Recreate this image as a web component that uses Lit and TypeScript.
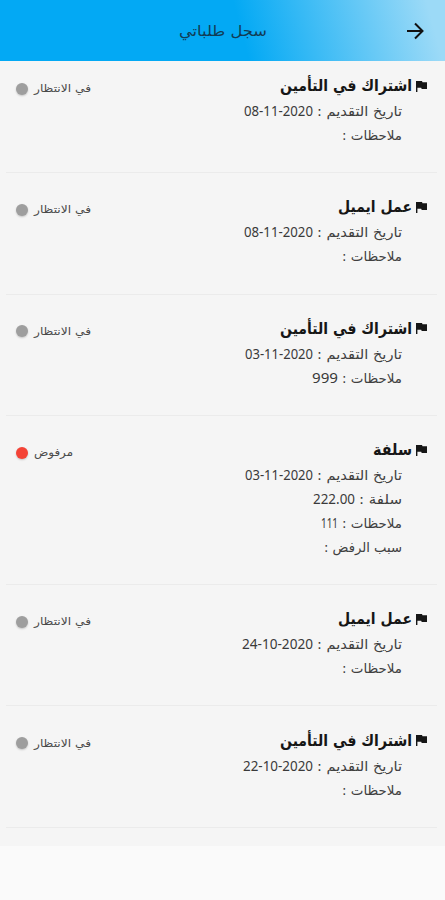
import { LitElement, html, svg, css } from "lit";
import { customElement, property } from "lit/decorators.js";

interface Line { label: string; labelWidth: number; value?: string; valueWidth?: number; }
interface Entry { title: string; width: number; rejected?: boolean; lines: Line[]; }

const dateLine = (value: string, valueWidth = 69): Line => ({ label: "تاريخ التقديم :", labelWidth: 85, value, valueWidth });
const notes = (value?: string, valueWidth?: number): Line => ({ label: "ملاحظات :", labelWidth: 60, value, valueWidth });

const entries: Entry[] = [
  { title: "اشتراك في التأمين", width: 132, lines: [dateLine("08-11-2020"), notes()] },
  { title: "عمل ايميل", width: 74, lines: [dateLine("08-11-2020"), notes()] },
  { title: "اشتراك في التأمين", width: 132, lines: [dateLine("03-11-2020", 68), notes("999", 26)] },
  {
    title: "سلفة", width: 39, rejected: true,
    lines: [
      dateLine("03-11-2020", 68),
      { label: "سلفة :", labelWidth: 43, value: "222.00", valueWidth: 42 },
      notes("111", 17),
      { label: "سبب الرفض :", labelWidth: 78 },
    ],
  },
  { title: "عمل ايميل", width: 74, lines: [dateLine("24-10-2020", 71), notes()] },
  { title: "اشتراك في التأمين", width: 132, lines: [dateLine("22-10-2020", 70), notes()] },
];

/** A single line of text fitted to a given width. */
@customElement("fit-text")
class FitText extends LitElement {
  @property() text = "";
  @property({ type: Number }) width = 0;
  @property({ type: Boolean }) latin = false;
  static styles = css`
    :host { display: block; height: 24px; flex: none; }
    svg { display: block; overflow: visible; }
    text { fill: currentColor; }
    .rtl { direction: rtl; }
    .ltr { direction: ltr; }
  `;
  render() {
    return html`<svg width=${this.width} height="24">${svg`<text
      class=${this.latin ? "ltr" : "rtl"} x=${this.latin ? 0 : this.width} y="17"
      textLength=${this.width} lengthAdjust="spacingAndGlyphs">${this.text}</text>`}</svg>`;
  }
}

@customElement("request-item")
class RequestItem extends LitElement {
  @property({ attribute: false }) entry!: Entry;
  static styles = css`
    :host { display: block; padding: 21.2px 18px 26.1px 16px; position: relative; }
    .line { position: absolute; left: 6px; right: 8px; bottom: 0; height: 1px; background: #ebebeb; }
    .head { display: flex; align-items: center; height: 26px; }
    .flag { width: 11px; height: 11px; display: block; margin-left: 4px; }
    .title { color: #161616; font-weight: bold; font-size: 16px; }
    .status { display: flex; align-items: center; gap: 6px; margin-right: auto; padding-top: 5px; color: #4a4a4a; font-size: 11px; }
    .status fit-text { margin-top: -3px; }
    .dot { width: 12px; height: 12px; border-radius: 50%; background: #9e9e9e; box-shadow: 0 1px 2px rgba(0,0,0,.2); }
    .dot.rejected { background: #f44336; }
    .row { display: flex; height: 24px; gap: 4px; padding-right: 25px; color: #404040; font-size: 13.5px; }
    .value { font-family: "Noto Sans", sans-serif; font-size: 13.5px; color: #3a3a3a; }
  `;
  render() {
    const e = this.entry;
    return html`
      <div class="head">
        <svg class="flag" viewBox="0 0 11 11"><path d="M0 0H6L6.5 1.2H11V8H5.7L5.2 6.7H1.4V11H0Z" fill="#161616"/></svg>
        <fit-text class="title" .text=${e.title} .width=${e.width}></fit-text>
        <div class="status">
          <fit-text .text=${e.rejected ? "مرفوض" : "في الانتظار"} .width=${e.rejected ? 39 : 57}></fit-text>
          <span class="dot ${e.rejected ? "rejected" : ""}"></span>
        </div>
      </div>
      ${e.lines.map((l) => html`<div class="row">
        <fit-text .text=${l.label} .width=${l.labelWidth}></fit-text>
        ${l.value ? html`<fit-text class="value" latin .text=${l.value} .width=${l.valueWidth ?? 0}></fit-text>` : ""}
      </div>`)}
      <div class="line"></div>`;
  }
}

@customElement("app-root")
class AppRoot extends LitElement {
  static styles = css`
    :host { display: block; height: 900px; overflow: hidden; background: #fafafa; direction: rtl; font-family: "DejaVu Sans", sans-serif; }
    header { height: 61px; display: grid; grid-template-columns: 40px 1fr 40px; align-items: center; background: linear-gradient(75deg, #03a9f4 0%, #03a9f4 54%, #9cdaf7 96%); }
    .back { width: 18px; height: 18px; margin-right: 21px; }
    .heading { justify-self: center; color: #123c55; font-size: 15px; }
    main { height: 785px; background: #f5f5f5; }
    .list request-item:first-child { padding-top: 12.2px; }
  `;
  render() {
    return html`
      <header>
        <svg class="back" viewBox="0 0 18 18"><path d="M1 9H16M9 1.5L16.5 9L9 16.5" fill="none" stroke="#111" stroke-width="2"/></svg>
        <fit-text class="heading" .text=${"سجل طلباتي"} .width=${88}></fit-text>
      </header>
      <main><div class="list">${entries.map((e) => html`<request-item .entry=${e}></request-item>`)}</div></main>`;
  }
}
